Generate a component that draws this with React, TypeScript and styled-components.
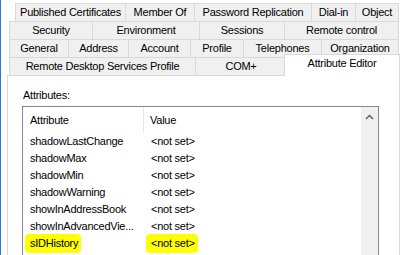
import React from "react";
import styled, { createGlobalStyle } from "styled-components";

const GlobalStyle = createGlobalStyle`
  html, body { margin: 0; padding: 0; background: #ffffff; }
  body {
    font-family: "Liberation Sans", Arial, sans-serif;
    font-size: 11px;
    letter-spacing: -0.25px;
    color: #000000;
  }
  * { box-sizing: border-box; }
`;

const Window = styled.div`
  width: 402px;
  height: 255px;
  overflow: hidden;
  background: #ffffff;
  border-left: 1px solid #2b7bd6;
  padding-top: 3px;
  display: flex;
  flex-direction: column;
`;

const TabStrip = styled.div`
  display: flex;
  flex-direction: column;
`;

const TabRow = styled.div<{ $offset: number }>`
  display: flex;
  align-items: flex-start;
  height: 18px;
  padding-left: ${(p) => p.$offset}px;
`;

const Tab = styled.div<{ $w: number; $selected?: boolean }>`
  flex: none;
  width: ${(p) => p.$w + 1 + (p.$selected ? 3 : 0)}px;
  height: ${(p) => (p.$selected ? 22 : 18)}px;
  margin-right: -1px;
  margin-left: ${(p) => (p.$selected ? -2 : 0)}px;
  margin-top: ${(p) => (p.$selected ? -3 : 0)}px;
  border: 1px solid #d9d9d9;
  border-bottom: none;
  background: ${(p) => (p.$selected ? "#ffffff" : "#f0f0f0")};
  position: ${(p) => (p.$selected ? "relative" : "static")};
  z-index: ${(p) => (p.$selected ? 1 : 0)};
  display: flex;
  justify-content: center;
  align-items: ${(p) => (p.$selected ? "flex-start" : "center")};
  padding-top: ${(p) => (p.$selected ? 2 : 0)}px;
  white-space: nowrap;
  line-height: 13px;
`;

const Panel = styled.div`
  flex: 1;
  margin-left: 6px;
  width: 393px;
  border: 1px solid #d9d9d9;
  border-bottom: none;
  background: #ffffff;
  padding: 13px 0 0 14px;
  display: flex;
  flex-direction: column;
`;

const Label = styled.div`
  padding-left: 1px;
  line-height: 13px;
  margin-bottom: 4px;
`;

const ListBox = styled.div`
  width: 357px;
  flex: 1;
  border: 1px solid #828790;
  border-bottom: none;
  display: flex;
`;

const ListContent = styled.div`
  flex: 1;
  display: flex;
  flex-direction: column;
`;

const HeaderRow = styled.div`
  display: grid;
  grid-template-columns: 121px 1fr;
  height: 26px;
`;

const HeaderCell = styled.div<{ $divider?: boolean }>`
  display: flex;
  align-items: center;
  padding-left: ${(p) => (p.$divider ? 7 : 6)}px;
  padding-bottom: 1px;
  border-right: ${(p) => (p.$divider ? "1px solid #e5e5e5" : "none")};
`;

const Row = styled.div`
  display: grid;
  grid-template-columns: 121px 1fr;
  height: 17px;
  align-items: center;
  white-space: nowrap;
`;

const Cell = styled.div`
  padding-left: 7px;
  line-height: 13px;
`;

const Mark = styled.span`
  display: inline-block;
  background: #ffff00;
  border-radius: 4px;
  padding: 3px 3px 3px 5px;
  margin: -3px -3px -3px -5px;
`;

const Scrollbar = styled.div`
  width: 17px;
  background: #f0f0f0;
  display: flex;
  flex-direction: column;
`;

const ArrowButton = styled.div`
  width: 17px;
  height: 17px;
  display: flex;
`;

const rows: { name: string; value: string; mark?: boolean }[] = [
  { name: "shadowLastChange", value: "<not set>" },
  { name: "shadowMax", value: "<not set>" },
  { name: "shadowMin", value: "<not set>" },
  { name: "shadowWarning", value: "<not set>" },
  { name: "showInAddressBook", value: "<not set>" },
  { name: "showInAdvancedVie...", value: "<not set>" },
  { name: "sIDHistory", value: "<not set>", mark: true },
];

const tabRows: { offset: number; tabs: { label: string; w: number; selected?: boolean }[] }[] = [
  {
    offset: 14,
    tabs: [
      { label: "Published Certificates", w: 110 },
      { label: "Member Of", w: 69 },
      { label: "Password Replication", w: 117 },
      { label: "Dial-in", w: 44 },
      { label: "Object", w: 43 },
    ],
  },
  {
    offset: 8,
    tabs: [
      { label: "Security", w: 83 },
      { label: "Environment", w: 107 },
      { label: "Sessions", w: 85 },
      { label: "Remote control", w: 114 },
    ],
  },
  {
    offset: 8,
    tabs: [
      { label: "General", w: 59 },
      { label: "Address", w: 60 },
      { label: "Account", w: 62 },
      { label: "Profile", w: 53 },
      { label: "Telephones", w: 78 },
      { label: "Organization", w: 77 },
    ],
  },
  {
    offset: 8,
    tabs: [
      { label: "Remote Desktop Services Profile", w: 186 },
      { label: "COM+", w: 91 },
      { label: "Attribute Editor", w: 112, selected: true },
    ],
  },
];

export default function App() {
  return (
    <>
      <GlobalStyle />
      <Window>
        <TabStrip>
          {tabRows.map((r, i) => (
            <TabRow key={i} $offset={r.offset}>
              {r.tabs.map((t) => (
                <Tab key={t.label} $w={t.w} $selected={t.selected}>
                  {t.label}
                </Tab>
              ))}
            </TabRow>
          ))}
        </TabStrip>
        <Panel>
          <Label>Attributes:</Label>
          <ListBox>
            <ListContent>
              <HeaderRow>
                <HeaderCell $divider>Attribute</HeaderCell>
                <HeaderCell>Value</HeaderCell>
              </HeaderRow>
              {rows.map((r) => (
                <Row key={r.name}>
                  <Cell>{r.mark ? <Mark>{r.name}</Mark> : r.name}</Cell>
                  <Cell>{r.mark ? <Mark>{r.value}</Mark> : r.value}</Cell>
                </Row>
              ))}
            </ListContent>
            <Scrollbar>
              <ArrowButton>
                <svg width="17" height="17" viewBox="0 0 17 17">
                  <path d="M5 12 L8.5 8.5 L12 12" fill="none" stroke="#606060" strokeWidth="1.5" />
                </svg>
              </ArrowButton>
            </Scrollbar>
          </ListBox>
        </Panel>
      </Window>
    </>
  );
}
